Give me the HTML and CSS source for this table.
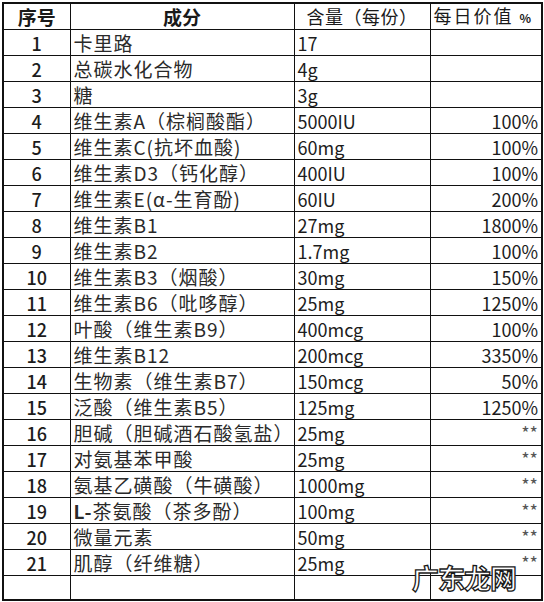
FILE: index.html
```html
<!DOCTYPE html>
<html lang="zh">
<head>
<meta charset="utf-8">
<link rel="stylesheet" href="styles.css">
</head>
<body>
<div class="page">
<table class="nutri">
  <colgroup>
    <col class="c1"><col class="c2"><col class="c3"><col class="c4">
  </colgroup>
  <thead>
    <tr class="head">
      <th class="h-num">序号</th>
      <th class="h-name">成分</th>
      <th class="h-amt">含量（每份）</th>
      <th class="h-dv">每日价值 <span class="pct">%</span></th>
    </tr>
  </thead>
  <tbody>
    <tr><td class="num">1</td><td class="name">卡里路</td><td class="amt">17</td><td class="dv"></td></tr>
    <tr><td class="num">2</td><td class="name">总碳水化合物</td><td class="amt">4g</td><td class="dv"></td></tr>
    <tr><td class="num">3</td><td class="name">糖</td><td class="amt">3g</td><td class="dv"></td></tr>
    <tr><td class="num">4</td><td class="name">维生素A（棕榈酸酯）</td><td class="amt">5000IU</td><td class="dv">100%</td></tr>
    <tr><td class="num">5</td><td class="name">维生素C(抗坏血酸)</td><td class="amt">60mg</td><td class="dv">100%</td></tr>
    <tr><td class="num">6</td><td class="name">维生素D3（钙化醇）</td><td class="amt">400IU</td><td class="dv">100%</td></tr>
    <tr><td class="num">7</td><td class="name">维生素E(α-生育酚)</td><td class="amt">60IU</td><td class="dv">200%</td></tr>
    <tr><td class="num">8</td><td class="name">维生素B1</td><td class="amt">27mg</td><td class="dv">1800%</td></tr>
    <tr><td class="num">9</td><td class="name">维生素B2</td><td class="amt">1.7mg</td><td class="dv">100%</td></tr>
    <tr><td class="num">10</td><td class="name">维生素B3（烟酸）</td><td class="amt">30mg</td><td class="dv">150%</td></tr>
    <tr><td class="num">11</td><td class="name">维生素B6（吡哆醇）</td><td class="amt">25mg</td><td class="dv">1250%</td></tr>
    <tr><td class="num">12</td><td class="name">叶酸（维生素B9）</td><td class="amt">400mcg</td><td class="dv">100%</td></tr>
    <tr><td class="num">13</td><td class="name">维生素B12</td><td class="amt">200mcg</td><td class="dv">3350%</td></tr>
    <tr><td class="num">14</td><td class="name">生物素（维生素B7）</td><td class="amt">150mcg</td><td class="dv">50%</td></tr>
    <tr><td class="num">15</td><td class="name">泛酸（维生素B5）</td><td class="amt">125mg</td><td class="dv">1250%</td></tr>
    <tr><td class="num">16</td><td class="name">胆碱（胆碱酒石酸氢盐）</td><td class="amt">25mg</td><td class="dv star">**</td></tr>
    <tr><td class="num">17</td><td class="name">对氨基苯甲酸</td><td class="amt">25mg</td><td class="dv star">**</td></tr>
    <tr><td class="num">18</td><td class="name">氨基乙磺酸（牛磺酸）</td><td class="amt">1000mg</td><td class="dv star">**</td></tr>
    <tr><td class="num">19</td><td class="name"><b class="lat">L-</b>茶氨酸（茶多酚）</td><td class="amt">100mg</td><td class="dv star">**</td></tr>
    <tr><td class="num">20</td><td class="name">微量元素</td><td class="amt">50mg</td><td class="dv star">**</td></tr>
    <tr><td class="num">21</td><td class="name">肌醇（纤维糖）</td><td class="amt">25mg</td><td class="dv star">**</td></tr>
    <tr class="empty"><td></td><td></td><td></td><td></td></tr>
  </tbody>
</table>
<div class="watermark">广东龙网</div>
</div>
</body>
</html>
```

FILE: styles.css
```css
html, body {
  margin: 0;
  padding: 0;
  background: #ffffff;
}

.page {
  position: relative;
  width: 544px;
  height: 602px;
  overflow: hidden;
}

.nutri {
  margin: 2px 0 0 2px;
  width: 541px;
  table-layout: fixed;
  border-collapse: collapse;
  border: 2px solid #111;
  font-family: "Noto Sans CJK SC", "Noto Sans", sans-serif;
  font-size: 18px;
  color: #1c1c1c;
}

.c1 { width: 67px; }
.c2 { width: 224px; }
.c3 { width: 136px; }
.c4 { width: 112px; }

.nutri th,
.nutri td {
  border: 1px solid #111;
  height: 25px;
  padding: 0 3px;
  line-height: 24px;
  white-space: nowrap;
  overflow: hidden;
}

.head th {
  height: 23px;
  line-height: 23px;
  font-weight: normal;
  color: #1a1a1a;
  padding: 0 3px;
}

.h-num, .h-name {
  text-align: center;
  font-weight: bold !important;
  font-size: 19px;
}

.h-amt {
  text-align: center;
  letter-spacing: 0.5px;
}

.h-dv {
  text-align: left;
  letter-spacing: 2px;
}

.pct {
  font-size: 12px;
  font-weight: bold;
  letter-spacing: 0;
}

.num {
  text-align: center;
  font-weight: 500;
}

.name {
  text-align: left;
  font-size: 19px;
  letter-spacing: 1px;
  color: #2a2a2a;
}

.lat {
  font-weight: bold;
}

.amt {
  text-align: left;
}

.dv {
  text-align: right;
}

.star {
  color: #555;
  font-size: 18px;
  vertical-align: top;
}

.empty td {
  height: 23px;
}

.watermark {
  position: absolute;
  left: 412px;
  top: 558px;
  font-family: "Noto Sans CJK SC", sans-serif;
  font-size: 27px;
  font-weight: bold;
  line-height: 40px;
  color: #ffffff;
  -webkit-text-stroke: 1.3px #1a1a1a;
  letter-spacing: -1px;
}
```
